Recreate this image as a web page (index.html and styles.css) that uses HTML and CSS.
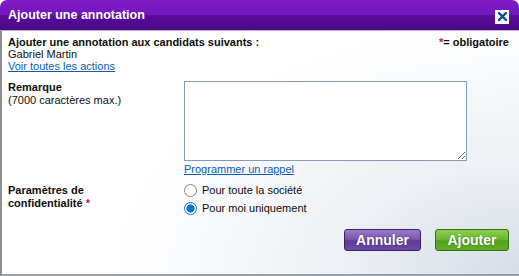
FILE: index.html
```html
<!DOCTYPE html>
<html lang="fr">
<head>
<meta charset="utf-8">
<title>Ajouter une annotation</title>
<link rel="stylesheet" href="styles.css">
</head>
<body>
<div class="dialog">
  <div class="dialog-header">
    <span class="dialog-title">Ajouter une annotation</span>
    <button class="close-btn" aria-label="Fermer">
      <svg width="9" height="9" viewBox="0 0 9 9"><path d="M1 1L8 8M8 1L1 8" stroke="#0b4f9a" stroke-width="2.4" stroke-linecap="square"/></svg>
    </button>
  </div>
  <div class="dialog-body">
    <div class="intro">
      <div class="intro-left">
        <div class="bold">Ajouter une annotation aux candidats suivants :</div>
        <div>Gabriel Martin</div>
        <a href="#" class="link">Voir toutes les actions</a>
      </div>
      <div class="required-note"><span class="star">*</span>= obligatoire</div>
    </div>

    <div class="row remark-row">
      <div class="label">
        <div class="bold">Remarque</div>
        <div>(7000 caractères max.)</div>
      </div>
      <div class="field">
        <textarea class="remark"></textarea>
        <a href="#" class="link">Programmer un rappel</a>
      </div>
    </div>

    <div class="row privacy-row">
      <div class="label">
        <div class="bold">Paramètres de<br>confidentialité <span class="star">*</span></div>
      </div>
      <div class="field radios">
        <label class="radio"><span class="radio-dot"></span>Pour toute la société</label>
        <label class="radio"><span class="radio-dot checked"></span>Pour moi uniquement</label>
      </div>
    </div>

    <div class="actions">
      <button class="btn btn-cancel">Annuler</button>
      <button class="btn btn-add">Ajouter</button>
    </div>
  </div>
</div>
</body>
</html>
```

FILE: styles.css
```css
html, body {
  margin: 0;
  padding: 0;
  background: #ffffff;
}
body {
  font-family: "Liberation Sans", Arial, sans-serif;
  font-size: 11px;
  color: #0d0d0d;
}
.dialog {
  width: 519px;
  height: 276px;
  box-sizing: border-box;
  display: flex;
  flex-direction: column;
}
.dialog-header {
  height: 30px;
  flex: none;
  border-radius: 7px 7px 0 0;
  background: linear-gradient(to bottom, #7e1bc6 0%, #7218bb 48%, #5a0c9c 52%, #4a0786 100%);
  display: flex;
  align-items: center;
  justify-content: space-between;
  padding: 0 10px 0 8px;
}
.dialog-title {
  color: #ffffff;
  font-weight: bold;
  font-size: 12.5px;
  font-family: "Liberation Sans", Arial, sans-serif;
}
.close-btn {
  width: 14px;
  height: 14px;
  background: #ffffff;
  border: none;
  padding: 0;
  display: flex;
  align-items: center;
  justify-content: center;
  margin-top: 3px;
}
.dialog-body {
  flex: 1;
  border-left: 2px solid #8e8e8e;
  border-bottom: 2px solid #9a9ea6;
  border-top: 1px solid #b8b8b8;
  background: radial-gradient(ellipse 420px 260px at 100% 100%, #d6dde6 0%, #eef1f5 45%, #ffffff 100%);
  padding: 5px 10px 0 6px;
  display: flex;
  flex-direction: column;
}
.bold { font-weight: bold; }
.link {
  color: #0b5cad;
  text-decoration: underline;
}
.intro {
  display: flex;
  justify-content: space-between;
  line-height: 12px;
}
.intro-left {
  display: flex;
  flex-direction: column;
}
.required-note {
  font-weight: bold;
}
.star { color: #b0195a; font-weight: bold; }
.row {
  display: flex;
}
.label {
  width: 176px;
  flex: none;
  line-height: 13px;
}
.remark-row {
  margin-top: 9px;
}
.field {
  display: flex;
  flex-direction: column;
  line-height: 12px;
}
.remark {
  width: 283px;
  height: 80px;
  box-sizing: border-box;
  border: 1px solid #7f9db9;
  margin: 0 0 2px 0;
  resize: both;
  background: #ffffff;
}
.privacy-row {
  margin-top: 8px;
}
.privacy-row .label { padding-top: 1px; }
.radios {
  gap: 4px;
}
.radio {
  display: flex;
  align-items: center;
  gap: 5px;
  line-height: 14px;
}
.radio-dot {
  width: 13px;
  height: 13px;
  border-radius: 50%;
  border: 1px solid #858585;
  background: #ffffff;
  box-sizing: border-box;
  display: inline-block;
}
.radio-dot.checked {
  border: 1px solid #0a78d7;
  background: radial-gradient(circle, #0a78d7 0 3.8px, #ffffff 4.4px);
}
.actions {
  display: flex;
  justify-content: flex-end;
  gap: 14px;
  margin-top: 14px;
}
.btn {
  height: 22px;
  border-radius: 3px;
  color: #ffffff;
  font-family: "Liberation Sans", Arial, sans-serif;
  font-weight: bold;
  font-size: 14px;
  text-shadow: 0 0 2px rgba(0,0,0,0.35);
  padding: 0;
  cursor: pointer;
}
.btn-cancel {
  width: 77px;
  border: 1px solid #3d2166;
  background: linear-gradient(to bottom, #9a7cc8 0%, #7a56b0 45%, #5e3b97 55%, #6b49a4 100%);
}
.btn-add {
  width: 74px;
  border: 1px solid #3a6d15;
  background: linear-gradient(to bottom, #8bd054 0%, #6cb834 45%, #55a21f 55%, #5fae28 100%);
}
```
